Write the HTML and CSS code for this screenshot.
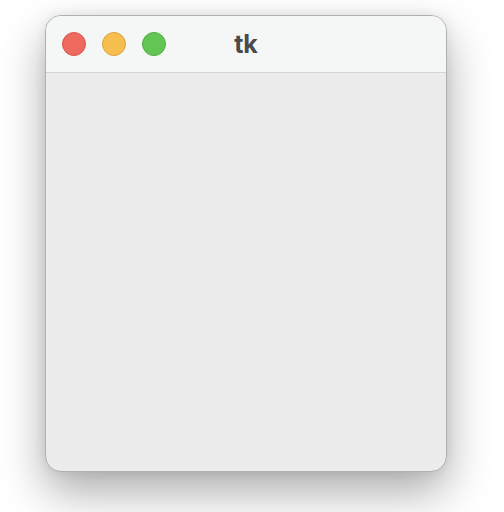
FILE: index.html
```html
<!DOCTYPE html>
<html>
<head>
<meta charset="utf-8">
<link rel="stylesheet" href="styles.css">
</head>
<body>
<div class="window">
  <div class="titlebar">
    <div class="lights">
      <span class="light red"></span>
      <span class="light yellow"></span>
      <span class="light green"></span>
    </div>
    <div class="title">tk</div>
  </div>
  <div class="content"></div>
</div>
</body>
</html>
```
FILE: styles.css
```css
html, body {
  margin: 0;
  padding: 0;
  background: #ffffff;
  width: 504px;
  height: 512px;
  overflow: hidden;
}
.window {
  margin: 15px 0 0 45px;
  width: 402px;
  height: 457px;
  box-sizing: border-box;
  border-radius: 16px;
  border: 1px solid #b0b0b0;
  background: #ececec;
  box-shadow: 0 20px 45px rgba(0,0,0,0.33), 0 0 12px rgba(0,0,0,0.08);
  display: flex;
  flex-direction: column;
  overflow: hidden;
}
.titlebar {
  height: 56px;
  flex: none;
  background: #f5f6f6;
  border-bottom: 1px solid #d3d3d3;
  position: relative;
  display: flex;
  align-items: center;
}
.lights {
  display: flex;
  gap: 16px;
  padding-left: 16px;
}
.light {
  width: 24px;
  height: 24px;
  border-radius: 50%;
  box-sizing: border-box;
}
.red { background: #ee6a5f; border: 1px solid #d8584e; }
.yellow { background: #f6be4f; border: 1px solid #dca43b; }
.green { background: #62c554; border: 1px solid #4fae43; }
.title {
  position: absolute;
  left: 0;
  right: 0;
  text-align: center;
  font-family: "Inter", "Liberation Sans", sans-serif;
  font-weight: 700;
  font-size: 25px;
  color: #4a4a4a;
}
.content {
  flex: 1;
}
```
